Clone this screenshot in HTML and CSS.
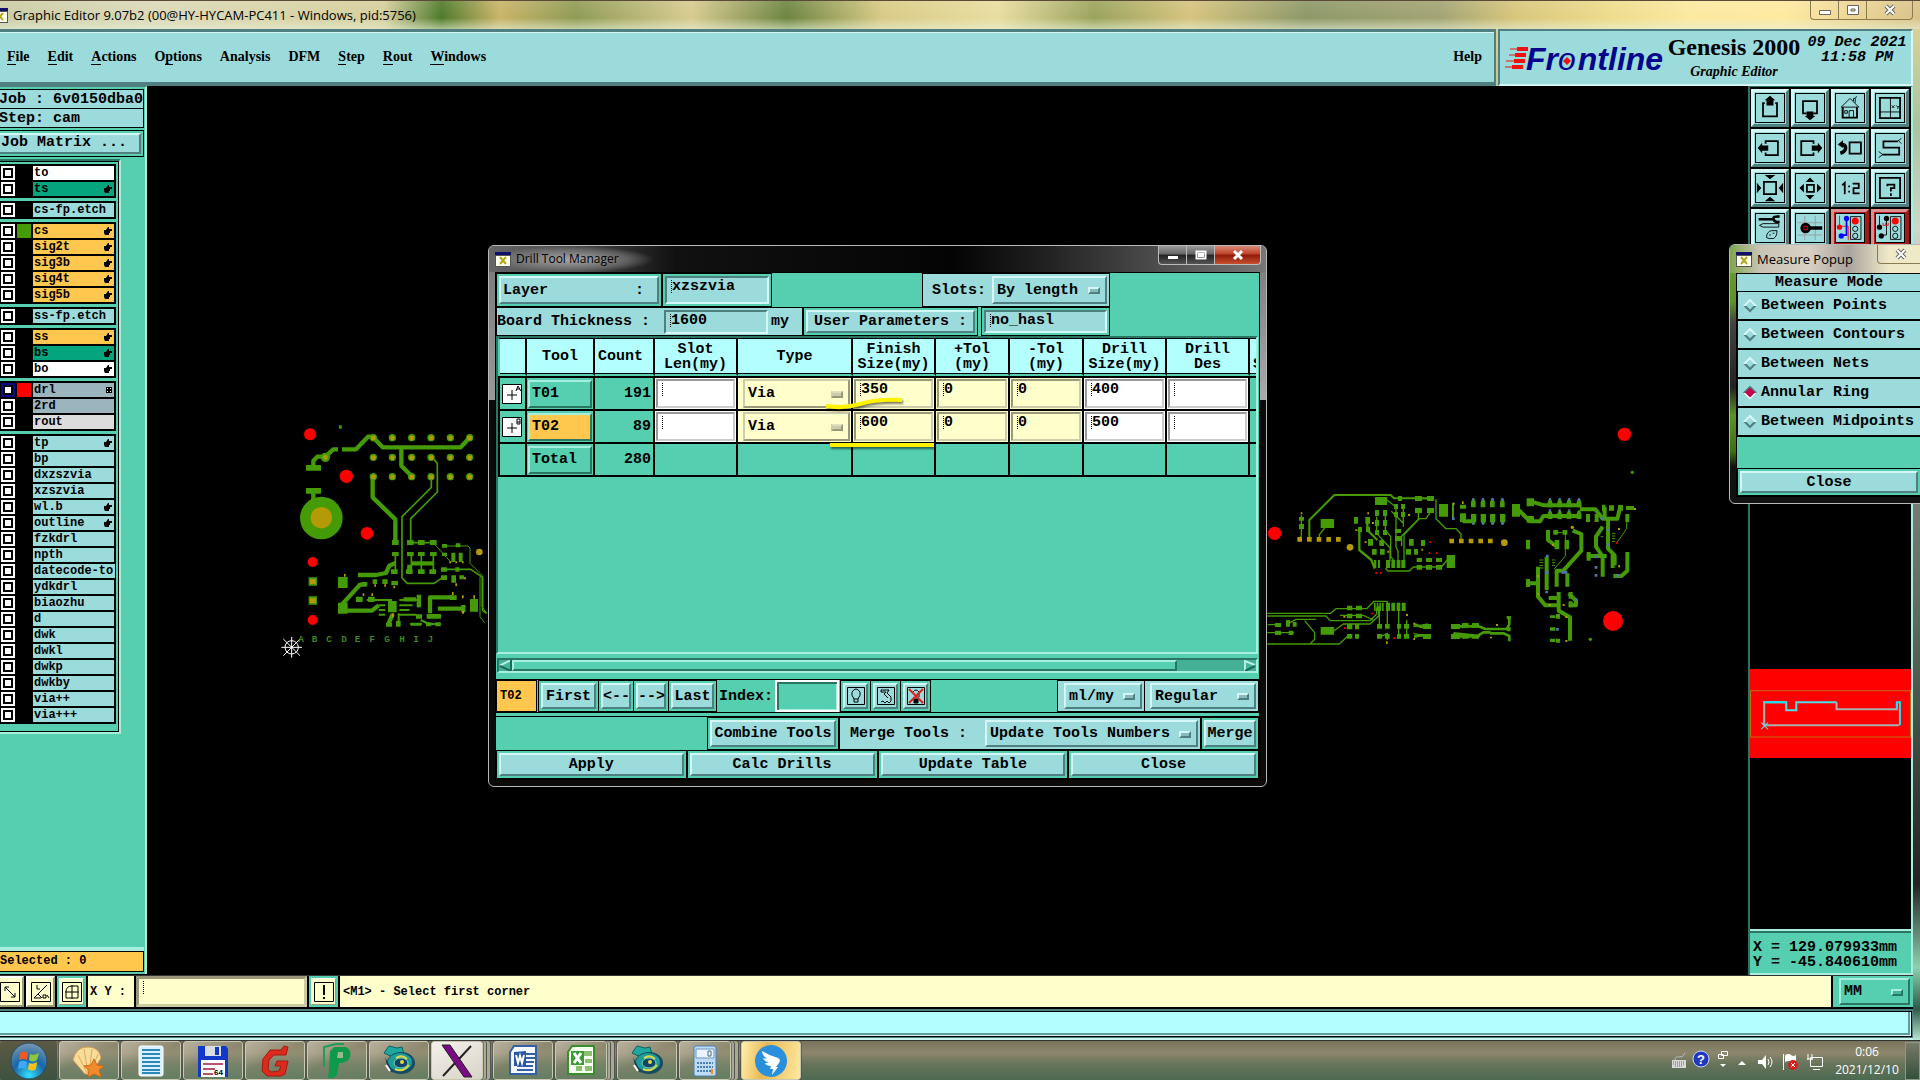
FILE: index.html
```html
<!DOCTYPE html>
<html lang="en">
<head>
<meta charset="utf-8">
<title>Graphic Editor</title>
<link rel="stylesheet" href="styles.css">
</head>
<body>
<svg class="defs" aria-hidden="true">
  <symbol id="hand" viewBox="0 0 8 8"><path d="M0 3h2l2-3h1v2h3v2H6v1H6v1H5v2H1L0 6z"/></symbol>
  <symbol id="grid" viewBox="0 0 6 6"><path d="M0 0h6v6H0z"/><path d="M1 1h1v1H1zM4 1h1v1H4zM1 4h1v1H1zM4 4h1v1H4z" fill="#fff"/></symbol>
  <symbol id="xwin" viewBox="0 0 16 15"><path d="M0 0h16v15H0z" fill="#555"/><path d="M1 4h14v10H1z" fill="#fffff0"/><path d="M0 0h16v3H0z" fill="#10106a"/><path d="M5 5l6 7M11 5l-6 7" stroke="#b5a51c" stroke-width="2"/></symbol>
  <symbol id="eye" viewBox="0 0 34 32"><path d="M2 8l5-7 8 2 5-1 2 7-9 4z" fill="#20a8a0" stroke="#0e5f5c"/><ellipse cx="19" cy="18" rx="14" ry="11" fill="#174a63"/><ellipse cx="18" cy="17" rx="12" ry="9" fill="#1e9c9a"/><ellipse cx="19" cy="18" rx="7" ry="5" fill="#13456b" stroke="#7fd6b0"/><path d="M13 24q8 4 14-4M14 13q6-4 11 1" fill="none" stroke="#e2d846" stroke-width="2"/><circle cx="20" cy="17" r="2" fill="#e2d846"/><path d="M3 12l3 12 5 4z" fill="#17364c"/><path d="M4 20l4 6" stroke="#fff" stroke-width="2"/></symbol>
</svg>

<div class="app">
  <header class="titlebar">
    <svg class="winicon" width="16" height="15"><use href="#xwin"/></svg>
    <h1>Graphic Editor 9.07b2 (00@HY-HYCAM-PC411 - Windows, pid:5756)</h1>
    <div class="winctl light">
      <button aria-label="Minimize"><svg width="14" height="12"><path d="M1.500 6.500h11v4h-11z" fill="#fff" stroke="#666"/></svg></button>
      <button aria-label="Restore"><svg width="14" height="12"><path d="M1.500 1.500h11v9h-11zM5 5h4v2H5z" fill="#fff" fill-rule="evenodd" stroke="#666"/></svg></button>
      <button class="x" aria-label="Close window"><svg width="14" height="12"><path d="M3 2l8 8M11 2l-8 8" stroke="#666" stroke-width="4"/><path d="M3 2l8 8M11 2l-8 8" stroke="#fff" stroke-width="2"/></svg></button>
    </div>
  </header>

  <div class="top">
    <nav class="menubar">
      <a href="#file"><u>F</u>ile</a><a href="#edit"><u>E</u>dit</a><a href="#actions"><u>A</u>ctions</a><a href="#options">O<u>p</u>tions</a><a href="#analysis">Analysis</a><a href="#dfm">DFM</a><a href="#step"><u>S</u>tep</a><a href="#rout"><u>R</u>out</a><a href="#windows"><u>W</u>indows</a><a class="help" href="#help">Help</a>
    </nav>
    <div class="brand">
      <svg width="162" height="40" viewBox="0 0 162 40">
        <g stroke="#f01010" stroke-width="2"><path d="M5 9h18M4 15h16M1 21h18M0 27h18" stroke-width="1"/><path d="M12 9h11M10 15h11M9 21h11M7 27h11" stroke-width="4"/></g>
        <text x="21" y="30" font-family="Liberation Sans, sans-serif" font-size="32" font-weight="bold" font-style="italic" fill="#06068c">Fr<tspan font-weight="normal">o</tspan><tspan dx="2">ntline</tspan></text>
        <path d="M62 17l4 4-4 4-4-4z" fill="#f01010"/>
      </svg>
      <div class="product"><strong>Genesis 2000</strong><em>Graphic Editor</em></div>
      <div class="date"><span>09 Dec 2021</span><span>11:58 PM</span></div>
    </div>
  </div>

  <main class="work">
    <aside class="left">
      <div class="job"><p>Job : 6v0150dba0</p><p>Step: cam</p></div>
      <div class="jm"><button class="btn">Job Matrix ...</button></div>
      <div class="layers">
        <div class="group">
          <label><input type="checkbox"><i></i><span class="white">to</span></label>
          <label><input type="checkbox"><i></i><span class="green">ts<svg><use href="#hand"/></svg></span></label>
        </div>
        <div class="group">
          <label><input type="checkbox"><i></i><span>cs-fp.etch</span></label>
        </div>
        <div class="group">
          <label><input type="checkbox"><i class="g"></i><span class="orange">cs<svg><use href="#hand"/></svg></span></label>
          <label><input type="checkbox"><i></i><span class="orange">sig2t<svg><use href="#hand"/></svg></span></label>
          <label><input type="checkbox"><i></i><span class="orange">sig3b<svg><use href="#hand"/></svg></span></label>
          <label><input type="checkbox"><i></i><span class="orange">sig4t<svg><use href="#hand"/></svg></span></label>
          <label><input type="checkbox"><i></i><span class="orange">sig5b<svg><use href="#hand"/></svg></span></label>
        </div>
        <div class="group">
          <label><input type="checkbox"><i></i><span>ss-fp.etch</span></label>
        </div>
        <div class="group">
          <label><input type="checkbox"><i></i><span class="orange">ss<svg><use href="#hand"/></svg></span></label>
          <label><input type="checkbox"><i></i><span class="green">bs<svg><use href="#hand"/></svg></span></label>
          <label><input type="checkbox"><i></i><span class="white">bo<svg><use href="#hand"/></svg></span></label>
        </div>
        <div class="group">
          <label><input type="checkbox" checked><i class="r"></i><span class="steel">drl<svg class="sm"><use href="#grid"/></svg></span></label>
          <label><input type="checkbox"><i></i><span class="steel">2rd</span></label>
          <label><input type="checkbox"><i></i><span class="grey">rout</span></label>
        </div>
        <div class="group">
          <label><input type="checkbox"><i></i><span>tp<svg><use href="#hand"/></svg></span></label>
          <label><input type="checkbox"><i></i><span>bp</span></label>
          <label><input type="checkbox"><i></i><span>dxzszvia</span></label>
          <label><input type="checkbox"><i></i><span>xzszvia</span></label>
          <label><input type="checkbox"><i></i><span>wl.b<svg><use href="#hand"/></svg></span></label>
          <label><input type="checkbox"><i></i><span>outline<svg><use href="#hand"/></svg></span></label>
          <label><input type="checkbox"><i></i><span>fzkdrl</span></label>
          <label><input type="checkbox"><i></i><span>npth</span></label>
          <label><input type="checkbox"><i></i><span>datecode-to</span></label>
          <label><input type="checkbox"><i></i><span>ydkdrl</span></label>
          <label><input type="checkbox"><i></i><span>biaozhu</span></label>
          <label><input type="checkbox"><i></i><span>d</span></label>
          <label><input type="checkbox"><i></i><span>dwk</span></label>
          <label><input type="checkbox"><i></i><span>dwkl</span></label>
          <label><input type="checkbox"><i></i><span>dwkp</span></label>
          <label><input type="checkbox"><i></i><span>dwkby</span></label>
          <label><input type="checkbox"><i></i><span>via++</span></label>
          <label><input type="checkbox"><i></i><span>via+++</span></label>
        </div>
      </div>
      <p class="selected">Selected : 0</p>
    </aside>

    <section class="canvas" aria-label="Board view">
      <svg viewBox="441 258 4803 2664" preserveAspectRatio="xMinYMin meet">
        <!-- left end of the board -->
        <g transform="translate(0 1020)" fill="none" stroke="#449b06" stroke-linejoin="round">
          <g stroke-width="13">
            <path d="M940 384v-22l12-12h24l24-22h14M1026 328h42l36-38h14l30 32h234l28-30M1204 325v52l30 30M1118 408v64l68 66v70M940 452v30" />
            <path d="M1074 705h54l30-6 10-22 18-8M1234 670h68M1228 690v-16M1020 800l60-66h20M1020 812h96l20-16M1210 778h38M1290 820v-48h68M1314 806h80M1390 795v22M1166 850l12-28" />
          </g>
          <g stroke-width="6">
            <path d="M1294 350l18 20v86l-80 80v70M1294 410v32l-88 88v184l16 16h80l30-20M1232 608h70M1186 640v50M1234 640v50M1264 640v50M1300 640v50M1332 688h80l36 24v100l12 8" stroke-width="5"/>
            <path d="M1300 608l52 58M1334 618h70l6 6v46l36 36v94l14 20M1440 710v120l14 18" stroke-width="3"/>
            <path d="M1100 780h76M1198 780h56M1198 796h40M1198 810h30M1136 796h20M1136 810h20M1136 824h20M1198 824h50M1196 820v36M1256 766v36M1262 840l24 12h36M1230 852h36"/>
          </g>
          <g fill="#449b06" stroke="none">
            <path d="M918 375h45v17h-45zM918 444h45v17h-45zM1014 711h29v33h-29zM1014 788h29v33h-29zM1410 777h24v38h-24zM1164 783h26v34h-26zM1250 764h13v38h-13zM1188 843h14v17h-14zM1158 848h18v12h-18zM1280 822h43v14h-43zM1278 847h16v12h-16zM1306 847h16v12h-16zM1248 823h18v13h-18zM1232 848h32v9h-32zM1068 770h20v16h-20zM1104 770h20v16h-20zM1350 766h20v14h-20z"/>
            <path d="M1176 600h20v15h-20zM1221 600h20v15h-20zM1254 600h20v15h-20zM1290 600h20v15h-20zM1176 636h20v12h-20zM1221 636h20v12h-20zM1254 636h20v12h-20zM1290 636h20v12h-20zM1173 688h20v14h-20zM1218 688h20v14h-20zM1254 688h20v14h-20zM1288 688h20v14h-20zM1326 612h15v11h-15zM1367 610h14v12h-14zM1326 638h15v10h-15zM1323 682h18v13h-18zM1366 682h12v13h-12zM1323 706h18v14h-18zM1354 706h14v22h-14zM1378 706h14v12h-14zM1118 718h13v14h-13zM1147 718h16v14h-16zM1174 723h20v13h-20zM1084 726h18v12h-18zM1354 638h12v28h-12zM1376 638h12v28h-12zM1017 256h8v10h-8z"/>
            <circle cx="964" cy="534" r="64"/><circle cx="976" cy="352" r="14"/>
            <g id="pads"><circle cx="1120" cy="293" r="11"/><circle cx="1177" cy="293" r="11"/><circle cx="1235" cy="293" r="11"/><circle cx="1293" cy="293" r="11"/><circle cx="1351" cy="293" r="11"/><circle cx="1409" cy="293" r="11"/></g>
            <use href="#pads" y="59"/><use href="#pads" y="117"/>
            <path d="M926 712h25v25h-25zM926 769h25v25h-25z"/>
          </g>
          <g fill="#b59a08" stroke="none">
            <circle cx="964" cy="533" r="32"/><circle cx="976" cy="352" r="7"/><circle cx="1438" cy="636" r="10"/>
            <path id="holes" stroke="#b59a08" stroke-width="3" d="M1115 289h10v10h-10zM1173 289h9v10h-9zM1230 289h10v10h-10zM1289 289h10v10h-10zM1347 289h9v10h-9zM1404 289h10v10h-10z"/>
            <use href="#holes" y="59"/><use href="#holes" y="117"/>
            <path d="M930 718h17v14h-17zM930 775h17v14h-17zM1032 702h5v8h-5zM1088 760h5v8h-5zM1114 760h5v8h-5zM1123 733h5v7h-5zM1153 733h5v7h-5zM1180 738h5v7h-5zM1348 664h5v6h-5zM1366 664h5v6h-5zM1386 664h5v6h-5zM1420 766h5v10h-5zM1356 756h5v9h-5zM1386 766h5v9h-5zM1386 812h6v9h-6zM1176 820h6v12h-6zM1366 730h5v8h-5zM1392 712h6v6h-6z"/>
          </g>
          <g fill="#f00" stroke="none"><circle cx="930" cy="283" r="18"/><circle cx="1039" cy="409" r="20"/><circle cx="1101" cy="580" r="19"/><circle cx="938" cy="666" r="15"/><circle cx="938" cy="840" r="15"/></g>
          <g stroke="#fff" stroke-width="3"><path d="M844 922h62M875 891v62M850 897l50 50M900 897l-50 50"/><circle cx="875" cy="922" r="20"/></g>
          <g fill="#3f8420" stroke="none" font-family="Liberation Mono, monospace" font-size="28" text-anchor="middle"><text x="903" y="907">A</text><text x="944" y="907">B</text><text x="987" y="907">C</text><text x="1032" y="907">D</text><text x="1073" y="907">E</text><text x="1116" y="907">F</text><text x="1161" y="907">G</text><text x="1206" y="907">H</text><text x="1248" y="907">I</text><text x="1291" y="907">J</text></g>
        </g>
        <!-- right end of the board -->
        <g transform="translate(3780 1260)" fill="none" stroke="#449b06" stroke-linejoin="round">
          <g stroke-width="4">
            <path d="M148 356v-56l75-75" stroke-width="6"/><path d="M222 225h170l10 10h120" stroke-width="6"/>
            <path d="M528 238v58l30 30h30l15 16v16M178 356v-12l16-20M124 286v60l-4 10M475 236h40M378 238l26 20M475 278v20l-50 50v30M510 278l-12 18h-20l-46 48v80M430 310l-36-36M376 270v60l16 20v60l12 14M350 290v50l40 44v40M408 260v120l6 14v30M430 260v60"/>
            <path d="M298 330v60l36 30 10 26M322 300v30l30 30" stroke-width="7"/>
            <path d="M376 444l8 9h64l12-12h84l20-24" stroke-width="4"/>
            <path d="M22 580h190l16-14h92l22-22h40v12M22 588h176l12 14h120l20-20v-20M240 586h70l30 14M22 672h216l28-26M220 634l30-22h80l26-24v-30M150 672l14-14v-20l-30-36M22 638h80M24 614h36M86 610l22-12h60"/>
            <path d="M382 548v66M416 548v100M440 600v50M460 620l44-8M460 640l44 10M358 560v60M362 650l20-10v20"/>
          </g>
          <g stroke-width="8">
            <path d="M462 612l20 8h30M462 650l20-4h30M580 619h76l20 8h64l8-14v-24M580 649h70l20-12h22M690 640h40l18 8v16M580 640l80 8"/>
          </g>
          <g stroke-width="12">
            <path d="M776 270l34 34h30l10-16h114M812 244l40 12h112M960 268h46l22 28h44l10-40M1044 296v90l20 20v30M1028 320l-20 30v30l20 30v60M980 408h60M1102 396v56l-18 16h-24M938 332l26 10v50l-54 60h-20v48M922 460v40M864 330v30l24 18M860 410v100M834 440v90l22 26h40v16l34 20v70M800 490h34M896 516v40M866 534h30M926 520l22 22v14h-22M608 304h36M1034 290v-30"/>
          </g>
          <path d="M880 338h36v70l-34 40M1100 300v26l-28 40M838 420h12M838 428h12M838 436h12M838 444h12M876 420h10M876 428h10M876 436h10M1022 350h8M1056 340h10M1056 348h10M1056 356h10M1056 364h10" stroke-width="3"/>
          <g fill="#449b06" stroke="none">
            <path d="M182 297h40v27h-40zM345 231h36v24h-36zM537 252h27v38h-27zM756 252h24v38h-24zM560 405h25v39h-25zM800 235h22v24h-22zM182 621h40v23h-40zM465 228h21v15h-21zM501 228h21v15h-21zM465 264h21v15h-21zM501 264h21v15h-21zM414 228h12v15h-12zM402 252h12v15h-12zM423 252h12v15h-12zM402 276h12v15h-12zM423 276h12v15h-12zM405 327h18v12h-18zM405 348h18v15h-18zM345 270h12v18h-12zM369 270h12v18h-12zM345 300h12v18h-12zM369 300h12v18h-12zM345 330h12v15h-12zM369 330h12v15h-12zM282 291h12v20h-12zM316 291h14v20h-14zM294 321h12v16h-12zM318 320h12v16h-12z"/>
            <path d="M324 357h15v20h-15zM358 360h14v18h-14zM336 387h14v17h-14zM360 387h14v17h-14zM447 357h14v20h-14zM438 387h15v17h-15zM462 387h12v17h-12zM483 360h12v18h-12zM378 420h12v24h-12zM394 420h11v24h-11zM410 420h11v24h-11zM424 420h12v24h-12zM342 420h7v24h-7zM354 420h6v24h-6zM470 414h16v12h-16zM498 414h18v12h-18zM528 414h18v12h-18zM470 435h16v14h-16zM498 435h18v14h-18zM528 435h18v14h-18zM117 291h15v11h-15zM117 312h15v15h-15z"/>
            <path d="M378 548h12v25h-12zM394 548h11v25h-11zM410 548h11v25h-11zM425 548h12v25h-12zM342 548h5v25h-5zM350 548h5v25h-5zM358 548h5v25h-5zM366 548h5v25h-5zM261 557h16v14h-16zM288 557h18v14h-18zM261 581h16v14h-16zM288 581h18v14h-18zM261 612h16v16h-16zM285 612h12v16h-12zM261 642h16v14h-16zM285 642h12v14h-12zM351 612h15v14h-15zM375 612h14v14h-14zM351 642h15v14h-15zM375 642h14v14h-14zM411 612h12v14h-12zM432 612h15v14h-15zM411 642h12v14h-12zM432 642h15v14h-15zM489 612h24v15h-24zM489 642h24v15h-24zM573 612h27v15h-27zM573 642h27v15h-27zM606 609h20v14h-20zM636 609h21v14h-21zM606 645h20v11h-20zM636 645h21v11h-21zM45 609h18v12h-18zM45 632h18v13h-18zM86 632h14v13h-14zM78 600h12v20h-12zM98 606h12v14h-12zM740 588h12v10h-12zM740 622h12v12h-12z"/>
            <path id="fan" d="M633 262v-16l4-10h6l4 10v16zM662 262v-16l4-10h6l4 10v16zM690 262v-16l4-10h6l4 10v16zM720 262v-16l4-10h6l4 10v16z"/>
            <path d="M633 282h16v22l-6 10h-5l-5-10zM662 282h16v22l-6 10h-5l-5-10zM690 282h16v22l-6 10h-5l-5-10zM720 282h16v22l-6 10h-5l-5-10zM600 254h18v12h-18zM600 280h18v26h-18zM576 248h6v50h-6z"/>
            <use href="#fan" x="230"/><use href="#fan" x="230" y="35"/>
            <path d="M800 288h22v20h-22zM978 282h12v24h-12zM1004 282h12v24h-12zM1026 254h10v20h-10zM1047 256h15v16h-15zM1074 256h15v16h-15zM1098 258h24v12h-24zM1096 282h12v24h-12zM798 360h12v28h-12zM798 477h12v24h-12zM884 360h14v28h-14zM914 360h13v28h-13zM880 330h14v14h-14zM908 330h14v14h-14zM980 396h12v26h-12zM1052 404h12v40h-12zM926 516h12v20h-12zM926 544h12v18h-12zM870 586h16v8h-16zM870 622h16v10h-16zM870 656h16v10h-16zM888 582h12v14h-12zM888 656h12v12h-12z"/>
            <circle cx="1117" cy="157" r="5"/><circle cx="991" cy="658" r="5"/>
          </g>
          <g fill="#b59a08" stroke="none">
            <path d="M112 351h14v14h-14zM141 351h14v14h-14zM170 351h14v14h-14zM199 351h14v14h-14zM228 351h14v14h-14zM568 356h14v14h-14zM597 356h14v14h-14zM626 356h14v14h-14zM655 356h14v14h-14zM684 356h14v14h-14z"/>
            <circle cx="270" cy="382" r="10"/><circle cx="733" cy="368" r="10"/><circle cx="937" cy="322" r="5"/>
            <path d="M122 277h5v6h-5zM322 277h5v6h-5zM336 306h6v6h-6zM444 282h6v6h-6zM286 328h6v5h-6zM314 364h6v5h-6zM382 392h5v6h-5zM484 386h5v6h-5zM606 244h5v8h-5zM579 248h5v6h-5zM1122 264h6v6h-6zM1074 324h6v6h-6zM876 372h6v6h-6zM832 464h5v8h-5zM832 520h5v6h-5zM866 552h6v6h-6zM908 552h6v6h-6zM1074 436h6v6h-6zM460 608h5v6h-5zM460 654h5v6h-5zM708 612h6v6h-6zM690 650h6v5h-6zM916 588h6v6h-6zM916 660h6v6h-6zM250 588h6v5h-6zM438 582h6v6h-6zM378 664h5v8h-5z"/>
          </g>
          <g fill="#4a78a8" stroke="none"><path d="M637 234h6v8h-6zM666 234h6v8h-6zM695 234h6v8h-6zM724 234h6v8h-6zM867 234h6v8h-6zM896 234h6v8h-6zM925 234h6v8h-6zM954 234h6v8h-6zM637 306h6v8h-6zM666 306h6v8h-6zM695 306h6v8h-6zM724 306h6v8h-6zM867 268h6v8h-6zM896 268h6v8h-6zM925 268h6v8h-6zM576 292h8v8h-8zM1022 292h10v8h-10zM1040 326h8v8h-8zM1040 370h8v8h-8zM1004 406h8v8h-8zM1004 438h8v8h-8zM1004 462h8v8h-8zM858 404h8v8h-8zM858 452h8v10h-8zM904 452h18v9h-18zM856 512h8v8h-8zM946 534h6v8h-6zM888 624h8v8h-8zM1070 462h8v10h-8z"/></g>
          <g fill="#f00" stroke="none"><circle cx="44" cy="340" r="20"/><circle cx="1093" cy="43" r="20"/><circle cx="1059" cy="603" r="30"/><path d="M346 456h5v5h-5zM360 456h5v5h-5zM508 364h5v5h-5zM506 397h5v5h-5zM528 397h5v5h-5zM334 578h5v5h-5zM1068 366h5v5h-5zM400 652h5v5h-5zM252 622h5v5h-5z"/></g>
        </g>
      </svg>
    </section>

    <aside class="right">
      <div class="tools">
        <button aria-label="Pan up"><svg viewBox="0 0 32 32"><path d="M10 10.500H8v15h16v-15h-2" stroke-width="2"/><path class="f" d="M16 2l6 5h-2v6h-8V7h-2z"/></svg></button>
        <button aria-label="Pan down"><svg viewBox="0 0 32 32"><path d="M12 22H8V8h16v14h-4" stroke-width="2"/><path class="f" d="M16 30l6-5h-2v-5h-8v5h-2z"/></svg></button>
        <button aria-label="Home"><svg viewBox="0 0 32 32"><path d="M6 15L16 5l10 10H6M8 15v12h16V15M20 8V5h2v5M15 27v-8h5v8M10 19h3v3h-3zM22 4l2-1" stroke-width="1"/><path d="M7.500 15v12h16.500V15"/></svg></button>
        <button aria-label="Zoom to coordinates"><svg viewBox="0 0 32 32"><path d="M4.500 4.500h23v23h-23z"/><path d="M16.500 4v24M4 20.500h24M18 16l3-3M18 13l3 3M23 13l2 2 2-2M25 15v2" stroke-width="1"/></svg></button>
        <button aria-label="Pan left"><svg viewBox="0 0 32 32"><path d="M11 11V8h14v16H11v-3" stroke-width="2"/><path class="f" d="M2 16l5-6v3h7v6H7v3z"/></svg></button>
        <button aria-label="Pan right"><svg viewBox="0 0 32 32"><path d="M20 11V8H6v16h14v-3" stroke-width="2"/><path class="f" d="M30 16l-5-6v3h-7v6h7v3z"/></svg></button>
        <button aria-label="Previous view"><svg viewBox="0 0 32 32"><path d="M15.500 9.500h13v13h-13z" stroke-width="2"/><path d="M6 12q5 0 5 4t-6 6" stroke-width="4"/><path class="f" d="M2 12l6-5v9z"/></svg></button>
        <button aria-label="Serpentine"><svg viewBox="0 0 32 32"><path d="M25 8.500H8.500v7h18v8H7" stroke-width="2"/><path d="M25 8l4-3M26 8l3 3M7 23l-4-3M7 24l-4 3" stroke-width="1"/></svg></button>
        <button aria-label="Zoom out"><svg viewBox="0 0 32 32"><path d="M9 9h14v14H9z" stroke-width="2"/><path class="f" d="M10 1h12l-6 5zM10 31h12l-6-5zM1 10v12l5-6zM31 10v12l-5-6z"/></svg></button>
        <button aria-label="Zoom in"><svg viewBox="0 0 32 32"><path d="M12.500 12.500h8v8h-8z" stroke-width="2"/><path class="f" d="M11 9h10l-5-5zM11 24h10l-5 5zM9 11v10l-5-5zM24 11v10l5-5z"/></svg></button>
        <button aria-label="Zoom 1:2"><svg viewBox="0 0 32 32"><path d="M7 13l3-3v13M15 13v2M15 19v2M19 11h7v5h-6v6h7" stroke-width="2"/></svg></button>
        <button aria-label="What is"><svg viewBox="0 0 32 32"><path d="M4.500 4.500h23v23h-23z"/><path d="M13 14v-2h8v4h-4v4M17 22v3" stroke-width="2"/></svg></button>
        <button aria-label="Options"><svg viewBox="0 0 32 32"><path d="M3 6h16M27 3q-8-1-7 3t7 3" stroke-width="3"/><path d="M4 13l4-2h18v4H8zM12 27q0-7 6-8h6q0 7-4 9h-5zM15 24h2M19 22h2" stroke-width="1"/></svg></button>
        <button aria-label="Snap"><svg viewBox="0 0 32 32"><path d="M10 2v28M22 2v28M2 10h28M2 24h28" stroke="#9a9a9a" stroke-width="1"/><path d="M14 16h16" stroke-width="4"/><circle class="f" cx="11" cy="16" r="6"/><path d="M9 14h4v4H9z" stroke="#f00" stroke-width="1"/></svg></button>
        <button class="hot" aria-label="Nets"><svg viewBox="0 0 32 32"><path d="M4 2v12h10v16M12 4v20H6" stroke="#f01010" stroke-width="1"/><path d="M12 4v20H6" stroke="#00f"/><circle cx="4" cy="15" r="3" fill="#f00" stroke="none"/><circle cx="12" cy="5" r="3" fill="#00f" stroke="none"/><circle cx="6" cy="25" r="3" fill="#00f" stroke="none"/><path d="M16.500 3h12v26h-12z" stroke-width="1"/><circle cx="22" cy="8" r="4" fill="#f00" stroke="none"/><circle cx="22" cy="17" r="3" stroke-width="1"/><circle cx="22" cy="25" r="3" stroke-width="1"/></svg></button>
        <button class="hot" aria-label="Clearance"><svg viewBox="0 0 32 32"><path d="M4 2v12M12 4v20H6" stroke-width="1"/><path d="M8 13h6M8 10v3M11 10v3M14 10v3" stroke="#f01010" stroke-width="1"/><circle class="f" cx="4" cy="15" r="3"/><circle class="f" cx="12" cy="5" r="3"/><circle class="f" cx="6" cy="25" r="3"/><path d="M16.500 3h12v26h-12z" stroke-width="1"/><circle cx="22" cy="8" r="4" fill="#f00" stroke="none"/><circle cx="22" cy="17" r="3" stroke-width="1"/><circle cx="22" cy="25" r="3" stroke-width="1"/></svg></button>
      </div>
      <div class="overview">
        <svg viewBox="0 0 160 89"><path d="M0 0h160v89H0z" fill="#f00"/><path d="M.5 21.500h159v46H.5z" fill="none" stroke="#c07010"/><path d="M14 56V33h22v8h10v-8h40" fill="none" stroke="#4ce0e8" stroke-width="2"/><path d="M86 33v7h60v-7" fill="none" stroke="#a8b0b0" stroke-width="2"/><path d="M14 33v23h134" fill="none" stroke="#a8b0b0" stroke-width="2"/><path d="M14 33h22M146 40v-7h3v23" fill="none" stroke="#20e0f0" stroke-width="2"/><path d="M11 53l7 7M18 53l-7 7" stroke="#4ce0e8"/></svg>
      </div>
      <div class="readout"><span>X = 129.079933mm</span><span>Y = -45.840610mm</span></div>
    </aside>
  </main>

  <div class="cmd">
    <button class="ic" aria-label="Corner mode"><svg viewBox="0 0 20 20"><path d="M.5.5h19v19H.5zM5 5l10 10M5 9V5h4M15 11v4h-4"/></svg></button>
    <button class="ic" aria-label="Angle mode"><svg viewBox="0 0 20 20"><path d="M.5.5h19v19H.5zM3 16L16 3M3 16h7M6 3v4h3M7 12l4 4M12 13h3v3h-3zM16 13l2 3"/></svg></button>
    <button class="ic on" aria-label="Grid mode"><svg viewBox="0 0 20 20"><path d="M.5.5h19v19H.5zM10 3v14M3 10h14M4 10q0-6 6-6h6v12H4z"/></svg></button>
    <label class="xy" for="xy">X Y :</label>
    <input class="xyin" id="xy" type="text">
    <button class="ic on" aria-label="Execute"><svg viewBox="0 0 20 20"><path d="M.5.5h19v19H.5z"/><path d="M10 3v10M10 15v2" stroke-width="2"/></svg></button>
    <p class="msg">&lt;M1&gt; - Select first corner</p>
    <div class="units"><span class="opt tealopt"><select aria-label="Units"><option>MM</option></select></span></div>
  </div>
  <div class="status"><div></div></div>
</div>

<footer class="taskbar">
  <button class="start" aria-label="Start"><svg width="38" height="38" viewBox="0 0 38 38"><defs><radialGradient id="orb" cx=".5" cy=".9" r=".9"><stop offset="0" stop-color="#35e0ff"/><stop offset=".5" stop-color="#1766a8"/><stop offset="1" stop-color="#7a98b0"/></radialGradient></defs><circle cx="19" cy="19" r="18" fill="url(#orb)" stroke="#2b4a60"/><path d="M10 11q4-3 8 0l-1 7q-4-2-8 0z" fill="#ee5a24"/><path d="M20 12q4 2 9-1l-2 7q-4 3-8 0z" fill="#8cc63f"/><path d="M9 20q4-3 8 0l-1 7q-4-2-8 0z" fill="#3fa9f5"/><path d="M19 21q4 2 8-1l-1 7q-4 3-8 0z" fill="#ffc20e"/></svg></button>
  <button aria-label="Shell"><svg width="34" height="34" viewBox="0 0 34 34"><path d="M13 30L1 16Q4 3 16 3q11 0 13 11L19 30z" fill="#f8dc9a" stroke="#d9a050"/><path d="M15 29L6 11M16 29L12 5M17 29l3-24M18 29l8-19" stroke="#e0a95a"/><path d="M22 15l3 6 7 1-5 4 2 7-7-3-6 3 1-7-5-4 7-1z" fill="#f08a2c" stroke="#d06a14"/></svg></button>
  <button aria-label="Notepad"><svg width="28" height="32" viewBox="0 0 28 32"><rect x="2" y="1" width="24" height="30" rx="2" fill="#d8f0ff" stroke="#fff"/><path d="M5 5h18M5 9h18M5 13h18M5 17h18M5 21h18M5 25h18M5 28h18" stroke="#2d87bd" stroke-width="2"/></svg></button>
  <button aria-label="Save tool"><svg width="32" height="34" viewBox="0 0 32 34"><path d="M1 2h28l2 3v28H1z" fill="#1238c8"/><path d="M8 2h16v10H8z" fill="#d8dce4"/><path d="M18 3h4v8h-4z" fill="#1238c8"/><path d="M4 16h24v17H4z" fill="#fff"/><path d="M6 20h20M6 25h12M6 30h10" stroke="#b85070" stroke-width="2"/><text x="17" y="31" font-family="Liberation Sans, sans-serif" font-size="8" font-weight="bold">64</text></svg></button>
  <button aria-label="Genesis"><svg width="32" height="34" viewBox="0 0 32 34"><path d="M25 2l4 1-2 8H15l-5 5-1 9 3 3 8-1 2-5h-6l2-5h11l-3 13-4 2H8l-5-5 1-12 7-9h11z" fill="#dc2a1c" stroke="#a81810"/></svg></button>
  <button aria-label="P tool"><svg width="34" height="36" viewBox="0 0 34 36"><path d="M4 24V4l12-3h8" fill="none" stroke="#1aa055" stroke-width="2"/><path d="M10 8l4-4h12q6 3 4 10-2 6-11 6l-2 12-4 3h-5l1-8z" fill="#0f9a4b"/><path d="M18 9h5v6h-6z" fill="#9ab890"/></svg></button>
  <button aria-label="Viewer"><svg width="34" height="32"><use href="#eye"/></svg></button>
  <button class="active stack" aria-label="X server"><svg width="32" height="34" viewBox="0 0 32 34"><path d="M1 1h8l22 32h-8z" fill="#7a0a86" stroke="#222"/><path d="M30 2L18 15M14 19L2 32" stroke="#222" stroke-width="2"/></svg></button>
  <button aria-label="Word"><svg width="32" height="34" viewBox="0 0 32 34"><path d="M7 2h22v28H3V8z" fill="#f4f8ff" stroke="#3560a8" stroke-width="2"/><path d="M19 10h9M19 14h9M18 18h9M10 22h16M10 26h16" stroke="#3560a8" stroke-width="2"/><path d="M7 8l12-1v15H7z" fill="#2a57a5"/><path d="M9 11l2 8 2-7 2 7 2-8" fill="none" stroke="#fff" stroke-width="2"/></svg></button>
  <button class="stack" aria-label="Excel"><svg width="32" height="34" viewBox="0 0 32 34"><path d="M7 2h22v28H3V8z" fill="#f4fff0" stroke="#3a8c2c" stroke-width="2"/><path d="M18 7h9v5h-9zM20 15h7v4h-7zM20 22h7v5h-7zM11 22h6v5h-6z" fill="#8cc070"/><path d="M6 7h13v14H6z" fill="#3a9c34"/><path d="M9 9l7 10M16 9L9 19" stroke="#fff" stroke-width="3"/></svg></button>
  <button aria-label="Viewer 2"><svg width="34" height="32"><use href="#eye"/></svg></button>
  <button class="stack" aria-label="Calculator"><svg width="24" height="32" viewBox="0 0 24 32"><rect x="1" y="1" width="22" height="30" rx="2" fill="#c0dcf4" stroke="#4a80b8"/><path d="M3 4h18v9H3z" fill="#e8f4ff" stroke="#6a98c0"/><path d="M15 6h3v5h-3z" fill="none" stroke="#567"/><path d="M4 18h16M4 22h16M4 26h16" stroke="#4a80b8" stroke-width="2" stroke-dasharray="2 1"/><path d="M18 24h2v5h-2z" fill="#f09020"/></svg></button>
  <button class="gold" aria-label="DingTalk"><svg width="34" height="34" viewBox="0 0 34 34"><circle cx="17" cy="17" r="16" fill="#2a8fdc"/><path d="M8 7q8 5 16 7 3 1 1 5l-3 4h2l-6 8 1-6h-3l1-3q-5 0-6-3l4 0q-5-2-6-5l4 1q-5-4-5-8z" fill="#fff"/></svg></button>
  <div class="tray">
    <svg width="152" height="22" viewBox="0 0 152 22">
      <path d="M1 10h14v8H1z" fill="#d8d8d8"/><path d="M2 12h12M2 14h12M4 16h8" stroke="#667" stroke-dasharray="1 1"/><path d="M4 10q0-4 4-3t6-4" fill="none" stroke="#bbb"/>
      <circle cx="30" cy="9" r="8" fill="#2038c0" stroke="#ccd4f0"/><text x="26" y="14" font-family="Liberation Sans, sans-serif" font-size="13" font-weight="bold" fill="#fff">?</text>
      <path d="M50.500 1.500h6v4h-6zM47.500 4.500h5v4h-5z" fill="none" stroke="#fff"/><path d="M49 14h6l-3 3z" fill="#fff"/>
      <path d="M67 15l4-4 4 4z" fill="#fff"/>
      <path d="M87 10h4l4-5v14l-4-5h-4z" fill="#fff"/><path d="M97 9q2 3 0 6M99 7q4 5 0 10" fill="none" stroke="#fff"/>
      <path d="M112.500 4v16" stroke="#fff"/><path d="M114 5q4-2 6 0t5 0v8q-3 1-5-1t-6 0z" fill="#fff"/><circle cx="122" cy="15" r="5" fill="#d82020"/><path d="M120 13l4 4M124 13l-4 4" stroke="#fff"/>
      <path d="M139.500 7.500h12v9h-12zM142 19.500h7M137 4v6M141 4v6M136 9h6" fill="none" stroke="#fff"/>
    </svg>
    <div class="clock"><span>0:06</span><span>2021/12/10</span></div>
    <button class="desk" aria-label="Show desktop"></button>
  </div>
</footer>

<section class="win popup" aria-label="Measure Popup">
  <header><svg class="winicon" width="16" height="15"><use href="#xwin"/></svg><h2>Measure Popup</h2>
    <div class="winctl light"><button class="x" aria-label="Close popup"><svg width="14" height="12"><path d="M3 2l8 8M11 2l-8 8" stroke="#666" stroke-width="4"/><path d="M3 2l8 8M11 2l-8 8" stroke="#fff" stroke-width="2"/></svg></button></div></header>
  <div class="pane">
    <h3>Measure Mode</h3>
    <label><input type="radio" name="mode">Between Points</label>
    <label><input type="radio" name="mode">Between Contours</label>
    <label><input type="radio" name="mode">Between Nets</label>
    <label><input type="radio" name="mode" checked>Annular Ring</label>
    <label><input type="radio" name="mode">Between Midpoints</label>
    <div class="cell close"><button class="btn">Close</button></div>
  </div>
</section>

<section class="win dialog" aria-label="Drill Tool Manager">
  <header><svg class="winicon" width="16" height="15"><use href="#xwin"/></svg><h2>Drill Tool Manager</h2>
    <div class="winctl dark">
      <button aria-label="Minimize dialog"><svg width="14" height="12"><path d="M2 7h10v3H2z" fill="#fff"/></svg></button>
      <button aria-label="Maximize dialog"><svg width="14" height="12"><path d="M2.500 2.500h9v7h-9zM5 5h4v2H5z" fill="none" stroke="#fff" stroke-width="2"/></svg></button>
      <button class="x red" aria-label="Close dialog"><svg width="14" height="12"><path d="M3 2l8 8M11 2l-8 8" stroke="#fff" stroke-width="3"/></svg></button>
    </div></header>
  <div class="pane">
    <div class="row r1">
      <div class="cell layer"><button class="btn split"><span>Layer</span><span>:</span></button></div>
      <div class="cell layerin"><input class="field" type="text" value="xzszvia" aria-label="Layer"></div>
      <label class="cell blue slots">Slots:<span class="opt"><select><option>By length</option></select></span></label>
    </div>
    <div class="row r2">
      <label class="cell blue board"><span>Board Thickness :</span><input class="field" type="text" value="1600">my</label>
      <div class="cell params"><button class="btn">User Parameters :</button></div>
      <div class="cell hasl"><input class="field" type="text" value="no_hasl" aria-label="User parameters"></div>
    </div>
    <div class="tableframe">
      <table>
        <colgroup><col class="c1"><col class="c2"><col class="c3"><col class="c4"><col class="c5"><col class="c4"><col class="c6"><col class="c6"><col class="c4"><col class="c4"><col class="c4"></colgroup>
        <thead><tr><th></th><th>Tool</th><th class="l">Count</th><th>Slot<br>Len(my)</th><th>Type</th><th>Finish<br>Size(my)</th><th>+Tol<br>(my)</th><th>-Tol<br>(my)</th><th>Drill<br>Size(my)</th><th>Drill<br>Des</th><th class="l"><br>S</th></tr></thead>
        <tbody>
          <tr><td class="mk"><svg width="20" height="20" viewBox="0 0 20 20"><path d="M.5.500h19v19H.5z" fill="#fff" stroke="#000"/><path d="M5 11h10M10 6v10M14 7l2-5 3 5M15 5h3" fill="none" stroke="#000"/></svg></td>
            <td><button class="tool">T01</button></td><td class="n">191</td>
            <td class="w"><input type="text" aria-label="Slot length T01"></td>
            <td class="y ty"><span class="opt cream"><select aria-label="Type T01"><option>Via</option></select></span></td>
            <td class="y"><input type="text" value="350" aria-label="Finish size T01"></td><td class="y"><input type="text" value="0" aria-label="Plus tolerance T01"></td><td class="y"><input type="text" value="0" aria-label="Minus tolerance T01"></td>
            <td class="w"><input type="text" value="400" aria-label="Drill size T01"></td><td class="w"><input type="text" aria-label="Drill designator T01"></td><td></td></tr>
          <tr><td class="mk"><svg width="20" height="20" viewBox="0 0 20 20"><path d="M.5.500h19v19H.5z" fill="#fff" stroke="#000"/><path d="M5 11h10M10 6v10M15 2v5h3V5h-3M15 2h3v3" fill="none" stroke="#000"/></svg></td>
            <td><button class="tool sel">T02</button></td><td class="n">89</td>
            <td class="w"><input type="text" aria-label="Slot length T02"></td>
            <td class="y ty"><span class="opt cream"><select aria-label="Type T02"><option>Via</option></select></span></td>
            <td class="y"><input type="text" value="600" aria-label="Finish size T02"></td><td class="y"><input type="text" value="0" aria-label="Plus tolerance T02"></td><td class="y"><input type="text" value="0" aria-label="Minus tolerance T02"></td>
            <td class="w"><input type="text" value="500" aria-label="Drill size T02"></td><td class="w"><input type="text" aria-label="Drill designator T02"></td><td></td></tr>
          <tr><td></td><td><button class="tool">Total</button></td><td class="n">280</td><td></td><td></td><td></td><td></td><td></td><td></td><td></td><td></td></tr>
        </tbody>
      </table>
    </div>
    <div class="scroll"><button aria-label="Scroll left"><svg width="13" height="11"><path d="M12 0L1 5l11 6" fill="#48b49a"/><path d="M12 0L1 5.500" stroke="#b5f0e2" stroke-width="2"/><path d="M1 6l11 5V0" fill="none" stroke="#1d6a58" stroke-width="2"/></svg></button><div class="track"><div class="thumb"></div></div><button aria-label="Scroll right"><svg width="13" height="11"><path d="M1 0l11 5L1 11z" fill="#48b49a"/><path d="M12 5L2 1v10" fill="none" stroke="#b5f0e2" stroke-width="2"/><path d="M2 11l10-5" stroke="#1d6a58" stroke-width="2"/></svg></button></div>
    <div class="row nav">
      <div class="cur">T02</div>
      <div class="cell"><button class="btn b1">First</button></div><div class="cell"><button class="btn b2">&lt;--</button></div><div class="cell"><button class="btn b2">--&gt;</button></div><div class="cell"><button class="btn b3">Last</button></div>
      <label class="idx">Index:<input type="text"></label>
      <div class="cell"><button class="btn bi" aria-label="Highlight"><svg viewBox="0 0 18 18"><path d="M.5.500h17v17H.5zM7 12q-3-4-2-7 2-3 4-3t4 3q1 3-2 7zM7 12v3h4v-3"/></svg></button></div>
      <div class="cell"><button class="btn bi" aria-label="Undo"><svg viewBox="0 0 18 18"><path d="M.5.500h17v17H.5zM4 3h8l-2 3 4 4v4l-2 2-2-2-2 2-2-2-2 1M4 3v2h5l-2 2 4 4" /></svg></button></div>
      <div class="cell"><button class="btn bi" aria-label="Delete"><svg viewBox="0 0 18 18"><path d="M.5.500h17v17H.5zM6 5q3-4 6 0v5"/><path d="M7 12h4v4H7z" fill="#000"/><path d="M2 2l14 14M16 2L2 16" stroke="#e02020" stroke-width="2"/></svg></button></div>
      <div class="cell blue push u1"><span class="opt"><select aria-label="Drill units"><option>ml/my</option></select></span></div>
      <div class="cell blue u2"><span class="opt"><select aria-label="Drill mode"><option>Regular</option></select></span></div>
    </div>
    <div class="row merge">
      <div class="cell push cb"><button class="btn">Combine Tools</button></div>
      <label class="cell blue mt"><span>Merge Tools :</span><span class="opt"><select><option>Update Tools Numbers</option></select></span></label>
      <div class="cell mg"><button class="btn">Merge</button></div>
    </div>
    <div class="row actions">
      <div class="cell"><button class="btn">Apply</button></div><div class="cell"><button class="btn">Calc Drills</button></div><div class="cell"><button class="btn">Update Table</button></div><div class="cell"><button class="btn">Close</button></div>
    </div>
  </div>
  <svg class="marks" width="116" height="56" viewBox="0 0 116 56" aria-hidden="true"><path d="M4 9q18 3 34-2 16-5 42-4M8 48h104" fill="none" stroke="#fff200" stroke-width="4"/></svg>
</section>
</body>
</html>
```
FILE: styles.css
```css
*, *::before, *::after { box-sizing: border-box; }
:root {
  --teal: #55cfb0; --teal-hi: #a8eede; --teal-lo: #2b7563;
  --blue: #9bdbdb; --hi: #d4f6f6; --lo: #4f7f80;
  --cream: #ffffcc; --orange: #ffc74e; --cyan: #b3ffff;
  --mono: "Liberation Mono", "Courier New", monospace;
  --ui: "Open Sans", "Noto Sans", sans-serif;
}
html, body { height: 100%; }
body { margin: 0; display: flex; flex-direction: column; overflow: hidden; position: relative; background: #000; font: bold 15px/15px var(--mono); color: #000; }
h1, h2, h3, p { margin: 0; font: inherit; }
button, input, select { font: inherit; color: inherit; margin: 0; padding: 0; border: 0; border-radius: 0; background: none; appearance: none; outline: 0; }
svg { display: block; flex: none; }
a { color: inherit; text-decoration: none; }
.defs { position: absolute; width: 0; height: 0; }

/* main window */
.app { flex: 1; min-height: 0; display: flex; flex-direction: column; padding-right: 7px; background: linear-gradient(#e6d596, #a9c4a0 12%, #cdd8cc 22%, #888 40%, #5b6a5c 60%, #222 85%, #8fd0b0 93%, #2d5a48 97%, #b8e8d0); }
.titlebar { display: flex; align-items: center; gap: 5px; height: 29px; margin-right: -7px; border-top: 1px solid #5c4a38; font: 13px/20px var(--ui); background: linear-gradient(rgba(255,255,255,.1), transparent 60%, rgba(230,240,215,.6)), linear-gradient(90deg, #c9cda4, #dcd9b8 8%, #d6cf9c 20%, #4f7a2a 23%, #c9b468 26%, #8f9b55 30%, #d8cb90 36%, #6d8440 41%, #d9cb86 46%, #e9dda0 52%, #9aa35c 57%, #d6c47e 62%, #8d9868 68%, #a3a473 75%, #d8c77c 79%, #efdc8c 84%, #fbe9a0 88%, #ffe9a0 93%, #d9c28a); }
.titlebar .winicon { margin-left: -8px; }
.titlebar h1 { flex: 1; }
.winctl { display: flex; align-self: flex-start; }
.winctl button { display: grid; place-items: center; width: 28px; height: 19px; border: 1px solid #8a7c50; border-width: 0 0 1px 1px; }
.winctl .x { width: 47px; border-right-width: 1px; border-radius: 0 0 4px 0; }
.winctl button:first-child { border-bottom-left-radius: 4px; }
.titlebar .winctl { margin-right: 7px; }

.top { display: flex; height: 57px; }
.menubar { flex: 1; display: flex; align-items: center; gap: 18px; padding: 0 12px 0 7px; margin-right: 2px; background: var(--blue); border: solid; border-width: 3px 2px 4px 0; border-color: var(--lo); box-shadow: inset 0 1px var(--hi); font: bold 14px/20px "Liberation Serif", serif; }
.menubar a { height: 20px; }
.menubar u { text-decoration: none; border-bottom: 1px solid #000; }
.menubar .help { margin-left: auto; }
.brand { display: flex; width: 415px; padding: 2px 2px 0 5px; background: var(--blue); border: 2px solid; border-color: var(--lo) var(--hi) var(--hi) var(--lo); }
.brand svg { margin-top: 7px; }
.product { width: 134px; display: flex; flex-direction: column; align-items: center; padding-top: 2px; font-family: "Liberation Serif", serif; white-space: nowrap; }
.product strong { font-size: 24px; line-height: 24px; }
.product em { font-size: 14px; line-height: 26px; }
.date { flex: 1; display: flex; flex-direction: column; align-items: center; padding: 2px 0 0 4px; font-style: italic; white-space: nowrap; }
.date span { height: 15px; }

.work { flex: 1; min-height: 0; display: flex; background: #000; }
.left { width: 147px; display: flex; flex-direction: column; background: var(--teal); border-right: 2px solid var(--teal-hi); border-top: 1px solid var(--lo); margin-bottom: 1px; }
.job { margin: 2px 1px 0 0; border: 1px solid #000; border-left: 0; background: var(--blue); white-space: nowrap; text-indent: -1px; }
.job p { height: 18px; line-height: 19px; }
.job p + p { height: 19px; border-top: 1px solid #000; }
.jm { margin: 2px 1px 0 0; border: 1px solid #000; border-left: 0; padding: 2px 2px 2px 0; height: 27px; }
.jm .btn { text-align: left; padding: 0 0 2px 1px; border-left: 0; }
.btn { display: block; width: 100%; height: 100%; background: var(--blue); border: 2px solid; border-color: var(--hi) var(--lo) var(--lo) var(--hi); text-align: center; white-space: nowrap; }
.layers { flex: none; display: flex; flex-direction: column; gap: 3px; width: 121px; height: 575px; margin-top: 2px; padding: 3px 3px 0 0; border: solid; border-width: 2px 2px 2px 0; border-color: var(--teal-lo) var(--teal-hi) var(--teal-hi); box-shadow: inset -1px 0 #000, inset 0 1px #000, inset 0 -1px #000; }
.group { display: flex; flex-direction: column; gap: 2px; width: 116px; padding: 2px 2px 2px 1px; background: #000; }
.group label { display: flex; gap: 2px; height: 14px; font-size: 12px; line-height: 14px; }
.group input { flex: none; width: 14px; height: 14px; border: 2px solid #fff; background: #fff; box-shadow: inset 0 0 0 2px #000; }
.group input:checked { border-color: #0a0a8c; }
.group i { flex: none; width: 14px; background: #000; }
.group i.g { background: #449b06; }
.group i.r { background: #f00; }
.group span { flex: 1; display: flex; justify-content: space-between; align-items: center; padding: 0 2px 0 1px; background: var(--blue); white-space: nowrap; }
.group svg { width: 8px; height: 8px; }
.group svg.sm { width: 6px; height: 6px; }
.group .white { background: #fff; } .group .green { background: #04a57e; } .group .orange { background: var(--orange); } .group .steel { background: #9bb4be; } .group .grey { background: #dcdcdc; }
.selected { margin: auto 1px 2px 0; height: 21px; border: 1px solid #000; border-left: 0; box-shadow: 0 -4px var(--teal-hi); background: var(--orange); font-size: 12px; line-height: 19px; }
.canvas { flex: 1; min-width: 0; }
.canvas svg { width: 100%; height: 100%; }
.right { width: 165px; display: flex; flex-direction: column; border-left: 2px solid var(--teal-lo); border-right: 2px solid var(--teal-hi); border-top: 1px solid var(--teal-lo); }
.tools { display: grid; grid-template-columns: repeat(4, 38px); gap: 2px; padding: 2px 1px 1px; }
.tools button { height: 38px; padding: 1px; background: var(--blue); border: 3px solid; border-color: var(--hi) var(--lo) var(--lo) var(--hi); }
.tools button svg { width: 30px; height: 30px; border: 1px solid #000; }
.tools svg, .cmd svg, .bi svg { fill: none; stroke: #000; stroke-width: 1; }
.tools svg { stroke-width: 2; }
.tools .f { fill: #000; stroke: none; }
.tools .hot { border-color: #d89090 #a01818 #a01818 #d89090; box-shadow: inset 0 0 0 1px #c01818; }
.overview { margin: auto 0; padding-top: 250px; }
.overview svg { width: 100%; }
.readout { height: 46px; padding: 9px 0 0 3px; display: flex; flex-direction: column; background: var(--teal); border: solid; border-width: 2px 0; border-color: var(--teal-hi); box-shadow: inset 0 2px var(--teal-lo); white-space: nowrap; }

.cmd { display: flex; gap: 2px; height: 34px; background: #000; border-top: 1px solid #333; border-bottom: 2px solid #000; font-size: 12px; }
.ic { width: 29px; padding: 3px; background: var(--cream); border: 2px solid; border-color: #fff #999a78 #999a78 #fff; }
.ic:first-child { width: 24px; padding-left: 0; border-left: 0; }
.ic svg { width: 20px; height: 20px; }
.ic.on { outline: 2px solid var(--teal); outline-offset: -2px; border-width: 3px; padding: 2px; }
.xy { width: 46px; background: var(--cream); line-height: 32px; padding-left: 2px; }
.xyin { width: 171px; border: 3px solid; border-color: #99997a #cccca0 #cccca0 #99997a; background: repeating-linear-gradient(#000 0 1px, transparent 1px 2px) 4px 2px / 1px 14px no-repeat, var(--cream); }
.msg { flex: 1; background: var(--cream); line-height: 32px; padding-left: 3px; }
.units { width: 80px; padding: 2px 3px 2px 6px; background: var(--teal); font-size: 15px; }
.status { height: 31px; padding: 2px 1px 3px 0; background: var(--lo); border-bottom: 2px solid #c8f4f0; }
.status div { height: 26px; border: solid #000; border-width: 1px 1px 1px 0; background: var(--cyan); box-shadow: inset -1px -1px var(--hi), inset -3px -3px #5f9c9c; }

/* option menus and fields */
.opt { position: relative; display: block; height: 100%; background: var(--blue); border: 2px solid; border-color: var(--hi) var(--lo) var(--lo) var(--hi); }
.opt select { display: block; width: 100%; height: 100%; padding-left: 3px; }
.opt::after { content: ""; position: absolute; right: 5px; top: 50%; width: 12px; height: 7px; margin-top: -3px; background: #88bcbc; border: 2px solid; border-color: var(--hi) var(--lo) var(--lo) var(--hi); pointer-events: none; }
.opt.cream { background: var(--cream); border-color: #ccccaa #99997a #99997a #ccccaa; }
.opt.cream::after { background: #ccccaa; border-color: #e0e0bc #99997a #99997a #ccccaa; }
.opt.tealopt { background: var(--teal); border-color: var(--teal-hi) var(--teal-lo) var(--teal-lo) var(--teal-hi); }
.opt.tealopt::after { background: #48b49a; border-color: var(--teal-hi) var(--teal-lo) var(--teal-lo) var(--teal-hi); }
.field, td input { display: block; width: 100%; height: 100%; padding: 0 0 7px 5px; border: 2px solid; background: repeating-linear-gradient(#000 0 1px, transparent 1px 2px) 4px 2px / 1px 14px no-repeat; }
.field { background-color: var(--blue); border-color: var(--lo) var(--hi) var(--hi) var(--lo); }

/* floating windows */
.win { position: absolute; border: 1px solid #b9b9b9; border-radius: 6px; padding: 0 6px 6px; }
.win header { display: flex; align-items: center; gap: 5px; height: 26px; font: 12px/20px var(--ui); }
.win h2 { flex: 1; }
.win .pane { background: var(--teal); border: 1px solid #000; }
.cell { border: 1px solid #000; padding: 2px; background: var(--teal); }
.blue { background: var(--blue); }

.popup { left: 1729px; top: 244px; width: 200px; background: linear-gradient(#6ca035, #5c9428 22%, #444 30%, #222 55%, #5c9428 66%, #3e7015 80%, #111 86%); }
.popup header { height: 28px; margin: 0 -6px; padding: 0 6px; border-radius: 6px 6px 0 0; background: linear-gradient(90deg, #7fa650, #c8c4b4 15%, #d9d0c4 40%, #a8a49c 60%, #efe9c8 80%); }
.popup h2 { font-size: 13px; }
.popup .winctl { margin-right: -2px; }
.popup .pane { height: 224px; display: flex; flex-direction: column; }
.popup h3 { height: 18px; line-height: 18px; text-align: center; background: var(--blue); border-bottom: 1px solid #000; }
.popup label { display: flex; align-items: center; gap: 4px; height: 29px; padding-left: 5px; background: var(--blue); border-bottom: 2px solid #000; border-left: 1px solid #000; white-space: nowrap; }
.popup label input { width: 14px; height: 14px; clip-path: polygon(50% 0, 100% 50%, 50% 100%, 0 50%); background: linear-gradient(var(--hi) 50%, var(--lo) 50%); display: grid; place-items: center; }
.popup label input::before { content: ""; width: 8px; height: 8px; clip-path: inherit; background: var(--blue); }
.popup label input:checked { background: linear-gradient(var(--lo) 50%, #fff 50%); }
.popup label input:checked::before { width: 10px; height: 10px; background: #c8004c; }
.popup .close { margin-top: auto; height: 28px; }

.dialog { left: 488px; top: 245px; width: 779px; background: linear-gradient(#777, #999) 0 0 / 6px 154px no-repeat, linear-gradient(#777, #aaa) 100% 0 / 6px 154px no-repeat, #0c0a08; }
.dialog header { background: radial-gradient(closest-side, #a8a8a8, #8888 70%, transparent) 0 0 / 165px 27px no-repeat, linear-gradient(90deg, #666, #444 12%, #111 24%, #040404 60%, #222 72%, #777); margin: 0 -6px; padding: 0 6px; border-radius: 5px 5px 0 0; }
.dialog .winctl { margin-right: -1px; }
.dark button { background: linear-gradient(#999, #666 45%, #222 50%, #555); border-color: #bbb; }
.dark .red { background: linear-gradient(#d88a78, #c04028 45%, #8c1a08 50%, #c85030); }
.row { display: flex; }
.r1 { height: 34px; } .r2 { height: 29px; }
.layer { width: 166px; } .split { display: flex; justify-content: space-between; align-items: center; padding: 0 13px 0 2px; }
.layerin { width: 110px; }
.slots { display: flex; align-items: center; gap: 6px; width: 188px; margin-left: 150px; padding-left: 9px; }
.slots .opt { flex: 1; }
.board { display: flex; align-items: center; gap: 3px; width: 307px; padding: 1px 2px 1px 0; white-space: nowrap; }
.board span { width: 164px; } .board .field { width: 104px; height: 24px; }
.r2 .field { padding-bottom: 3px; }
.params { width: 175px; } .hasl { width: 129px; margin-left: 3px; }
.tableframe { height: 318px; margin: 0 1px 0 0; overflow: hidden; border: 2px solid; border-color: var(--teal-lo) var(--teal-hi) var(--teal-hi) var(--teal-lo); }
table { table-layout: fixed; width: 835px; border-collapse: separate; border-spacing: 0; }
.c1 { width: 29px; } .c2 { width: 68px; } .c3 { width: 60px; } .c4 { width: 83px; } .c5 { width: 115px; } .c6 { width: 74px; }
th { height: 38px; padding: 0; background: var(--cyan); border-right: 2px solid #000; border-top: 1px solid #000; box-shadow: inset 0 -1px #000; border-bottom: 2px solid var(--teal); white-space: nowrap; }
th:first-child { border-left: 2px solid var(--teal); }
th.l { text-align: left; padding-left: 3px; }
td { height: 33px; padding: 1px; border-right: 2px solid #000; border-bottom: 2px solid #000; }
tbody tr:first-child td { height: 35px; border-top: 2px solid #000; }
td:first-child { border-left: 2px solid #000; }
td.mk { padding: 0 2px; }
td.n { text-align: right; padding-right: 2px; }
td input { height: 29px; padding-bottom: 9px; border-color: #999 #ccc #ccc #999; }
td.w { background: #fff; } td.y { background: var(--cream); } td.y input { border-color: #99997a #ccccaa #ccccaa #99997a; }
td.ty { padding-left: 5px; } td .opt { height: 29px; }
.tool { width: 64px; height: 28px; border: 2px solid; border-color: var(--teal-hi) var(--teal-lo) var(--teal-lo) var(--teal-hi); text-align: left; padding-left: 2px; }
.tool.sel { background: var(--orange); }
.scroll { display: flex; height: 15px; margin: 4px 1px 6px; border: 2px solid; border-color: var(--teal-lo) var(--teal-hi) var(--teal-hi) var(--teal-lo); background: #45b096; }
.track { flex: 1; } .thumb { width: 91%; height: 11px; background: var(--teal); border: 2px solid; border-color: var(--teal-hi) var(--teal-lo) var(--teal-lo) var(--teal-hi); }
.nav { height: 34px; border: solid #000; border-width: 1px 0; }
.cur { width: 41px; margin-right: 1px; background: var(--orange); border: 1px solid #000; font-size: 12px; line-height: 30px; padding-left: 3px; }
.nav .cell { margin-right: -1px; }
.b1 { width: 55px; } .b2 { width: 30px; } .b3 { width: 43px; }
.idx { display: flex; align-items: center; gap: 2px; padding-left: 3px; margin-right: 1px; }
.idx input { width: 64px; height: 32px; border: 2px solid #fff; box-shadow: inset 2px 2px var(--teal-lo), inset -1px -1px var(--teal-hi); }
.bi { width: 25px; padding: 1px; } .bi svg { width: 18px; height: 18px; margin: auto; }
.nav .push, .push { margin-left: auto; }
.u1 { width: 88px; padding-left: 6px; } .u2 { width: 115px; padding-left: 5px; }
.nav .u2 { margin-right: 0; }
.merge { height: 34px; margin-top: 3px; border-top: 1px solid #000; }
.cb { width: 132px; } .mt { display: flex; align-items: center; width: 362px; padding-left: 10px; white-space: nowrap; }
.mt span:first-child { width: 135px; } .mt .opt { flex: 1; } .mg { width: 58px; }
.actions { height: 29px; } .actions .cell { flex: 1; }
.marks { position: absolute; left: 333px; top: 151px; filter: drop-shadow(1px 2px 1px #0008); pointer-events: none; }

/* taskbar */
.taskbar { display: flex; align-items: center; gap: 2px; height: 40px; border-top: 1px solid #333; background: linear-gradient(#77735a, #8d866c 30%, #66745a 60%, #4d6a52); }
.taskbar > button { display: grid; place-items: center; width: 60px; height: 39px; border: 1px solid #c8c8b0; border-radius: 3px; outline: 1px solid #4448; background: linear-gradient(155deg, #d8cfc0aa, #a09a8066 45%, #7f9a7a66); }
.taskbar > .start { width: 57px; border: 0; outline: 0; background: linear-gradient(#5c5a44, #3d5240); }
.taskbar > .active { background: linear-gradient(155deg, #f4f0ea, #d8d4c8); }
.taskbar > .gold { background: linear-gradient(100deg, #fff0b0, #e8b850 40%, #ffe9a0); }
.taskbar > .stack { width: 52px; margin-right: 8px; box-shadow: 3px 0 #a9a890, 4px 0 #555, 7px 0 #a9a890, 8px 0 #555; }
.tray { margin-left: auto; display: flex; align-items: center; gap: 10px; height: 100%; }
.clock { display: flex; flex-direction: column; align-items: center; width: 68px; color: #fff; font: 12px/18px var(--ui); white-space: nowrap; }
.desk { width: 15px; height: 38px; border: 1px solid #8a9a88; background: linear-gradient(#777a66, #34503c); }
.tray .desk { margin-left: -6px; }
```
